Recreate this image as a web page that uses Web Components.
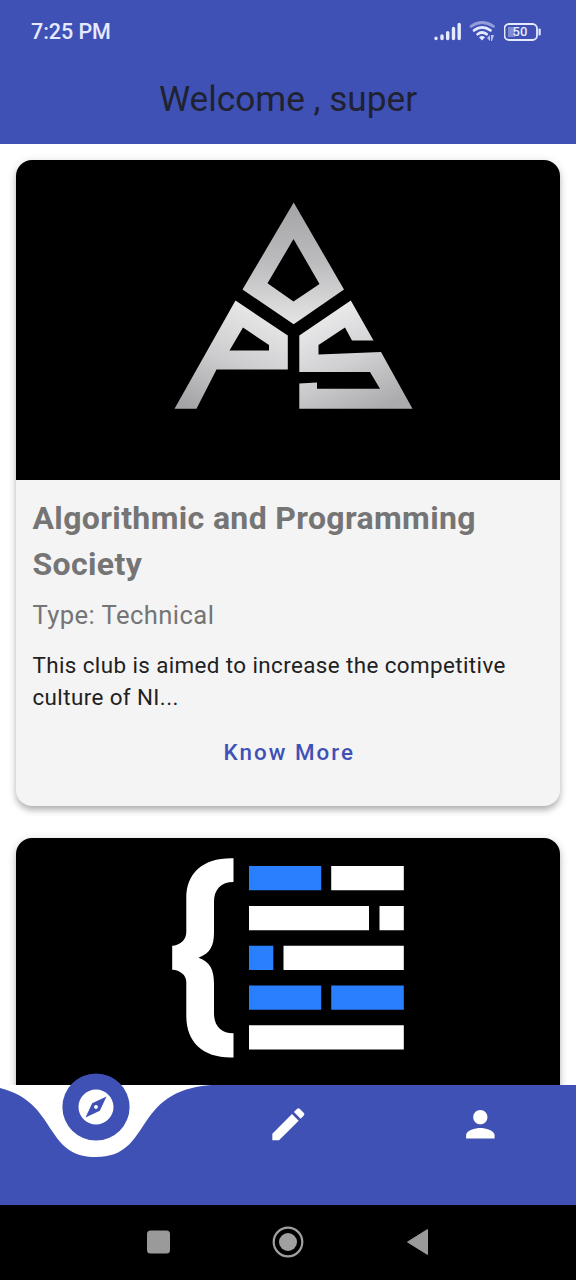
<!DOCTYPE html>
<html lang="en">
<head>
<meta charset="utf-8">
<title>Clubs</title>
<style>
html,body{margin:0;height:100%}
body{background:#fff;font-family:Roboto,"Liberation Sans",sans-serif;overflow:hidden}
</style>
</head>
<body>
<club-app></club-app>
<script>
function define(name, html) {
  const template = document.createElement('template');
  template.innerHTML = html;
  customElements.define(name, class extends HTMLElement {
    constructor() {
      super();
      this.attachShadow({ mode: 'open' }).append(template.content.cloneNode(true));
    }
  });
}

define('status-bar', `
<style>
:host{display:flex;justify-content:space-between;align-items:center;height:62px;padding:0 34px 0 31px;box-sizing:border-box;color:#e6eaff}
.time{font-size:21.5px;font-weight:500;line-height:26px;letter-spacing:-.05px;padding-top:2px}
.icons{display:flex;align-items:center;gap:8px}
svg{display:block}
.battery{display:grid;align-items:center;width:38px;height:18px}
.battery>*{grid-area:1/1}
.battery span{font-size:13px;font-weight:500;line-height:18px;width:32px;text-align:center;padding-top:1px}
</style>
<span class="time">7:25 PM</span>
<div class="icons">
  <svg width="28" height="20" viewBox="0 0 28 20" stroke="currentColor" stroke-width="3.400" stroke-linecap="round"><path d="M3 17.600v-.4M9 17.600v-2.600M14.700 17.600v-6M20.500 17.600V7.500M26.200 17.600V3.500"/></svg>
  <svg width="27" height="22" viewBox="0 0 27 22" fill="none" stroke="currentColor" stroke-width="2.700" stroke-linecap="round"><path opacity=".5" d="M2 6.400Q13 -1.400 24.500 6.400"/><path d="M5 10.400Q13 4.400 21.500 10.400"/><path d="M8.600 14.200Q13 10.800 17.600 14.200"/><path stroke="none" fill="currentColor" d="M10 17.200q3-2.600 6 0l-3 3.300z"/><path stroke="none" fill="currentColor" opacity=".75" d="M18 18l3-3v6zM22 15h3l-2 6h-1z"/></svg>
  <div class="battery">
    <svg width="38" height="18" viewBox="0 0 38 18"><path fill="currentColor" opacity=".38" d="M4 4h7v10H4z"/><rect x=".5" y="1" width="32.500" height="16" rx="4.500" fill="none" stroke="currentColor" stroke-width="1.800"/><path d="M35.600 6.500v5" stroke="currentColor" stroke-width="2.200" stroke-linecap="round"/></svg>
    <span>50</span>
  </div>
</div>`);

define('app-header', `
<style>
:host{display:block;height:144px;background:#3f51b5}
h1{margin:0;height:72px;line-height:74px;text-align:center;font-size:35.200px;font-weight:400;color:#202230}
</style>
<status-bar></status-bar><h1><slot></slot></h1>`);

define('club-card', `
<style>
:host{display:block;border-radius:16px;background:#f4f4f4;box-shadow:0 5px 6px -1px rgba(0,0,0,.22),0 2px 10px rgba(0,0,0,.17)}
.media{height:320px;border-radius:16px 16px 0 0;overflow:hidden;background:#000}
.body{padding:15px 16px 0 16.500px;height:311.400px}
h2{margin:0;font-size:32px;line-height:46px;font-weight:700;color:#757575;letter-spacing:.36px}
.type{margin-top:9px;font-size:25.600px;line-height:38px;color:#757575;letter-spacing:.42px}
.text{margin-top:15px;font-size:22.400px;line-height:32px;color:#212121;letter-spacing:.4px;white-space:pre-line}
button{display:block;margin:19px auto 0;padding:0 9px 0 11px;height:40px;border:0;background:none;font:500 22.400px/40px Roboto,sans-serif;letter-spacing:2px;color:#3f51b5}
</style>
<div class="media"><slot name="media"></slot></div>
<div class="body">
<h2><slot name="title"></slot></h2>
<div class="type"><slot name="type"></slot></div>
<div class="text"><slot name="text"></slot></div>
<button><slot name="action"></slot></button>
</div>`);

define('aps-logo', `
<style>:host{display:block}svg{display:block;width:544px;height:320px}</style>
<svg viewBox="16 160 544 320">
<defs>
<linearGradient id="a" x1="0" y1="203" x2="0" y2="323" gradientUnits="userSpaceOnUse"><stop stop-color="#a4a4a6"/><stop offset=".5" stop-color="#bcbcbe"/><stop offset="1" stop-color="#e4e4e5"/></linearGradient>
<linearGradient id="p" x1="250" y1="310" x2="205" y2="412" gradientUnits="userSpaceOnUse"><stop stop-color="#e6e6e7"/><stop offset=".5" stop-color="#ccccce"/><stop offset="1" stop-color="#a5a5a8"/></linearGradient>
<linearGradient id="s" x1="325" y1="310" x2="375" y2="412" gradientUnits="userSpaceOnUse"><stop stop-color="#ebebec"/><stop offset=".5" stop-color="#d0d0d3"/><stop offset="1" stop-color="#ababae"/></linearGradient>
</defs>
<g fill-rule="evenodd">
<path fill="url(#a)" d="M293.700 202.500 344 289.500 293.700 324.300 242.500 289.500zM293.500 239 267.500 283.300 293.500 301.500 319.500 284z"/>
<path fill="url(#p)" d="M235.500 300.500 287.800 335.500V369.500H216.500L196.500 408.700H174.500zM243 327.500 229.500 350.500H269V345z"/>
<path fill="url(#s)" d="M350.800 300.500 373.500 340.500H352L345 327.500 318.500 345V354.500L381 352 412.500 408.700H299.300V383.500L317 382.500V388.800H380L370 372H299.300V335.500z"/>
</g></svg>`);

define('code-logo', `
<style>:host{display:block}svg{display:block;width:544px;height:320px}</style>
<svg viewBox="16 838 544 320">
<path fill="#fff" d="M233.500 858.300V882C221 882 214 889.500 214 902V932C214 946 210.500 953 198.500 957.700C210.500 962 214 970 214 984V1013C214 1026 221 1033.300 233.500 1033.300V1057.400C204 1058.500 186.300 1043 186.300 1016V982C186.300 975 180 970.200 172.200 969.800V945.800C180 945.400 186.300 940 186.300 932V898C186.300 873 203 857.500 233.500 858.300z"/>
<path fill="#fff" d="M331.200 866h72.600v24.300h-72.600zM249 906h120v24.300H249zM379.500 906h24.300v24.300h-24.300zM283.500 945.700h120.300V970H283.500zM249 1025.200h154.800v24.300H249z"/>
<path fill="#2a7fff" d="M249 866h72.200v24.300H249zM249 945.700h24.300V970H249zM249 985.500h72.200v24.300H249zM331.200 985.500h72.600v24.300h-72.600z"/>
</svg>`);

define('nav-curve', `
<style>
:host{display:grid;height:120px}
:host>*{grid-area:1/1}
svg{display:block;overflow:visible}
.items{display:grid;grid-template-columns:repeat(3,1fr);position:relative}
.items>div{display:flex;justify-content:center;align-items:flex-start}
.plain{padding-top:18.200px}
.active svg{margin-top:-12px}
</style>
<svg width="576" height="120" viewBox="0 0 576 120"><path fill="#fff" d="M0 0H576V120H0z"/><path fill="#3f51b5" d="M-19.200 0C61.440 6 38.400 72 96 72C153.600 72 130.560 6 211.200 0H576V120H-20z"/></svg>
<div class="items">
<div class="active"><svg width="68" height="68" viewBox="0 0 68 68"><circle cx="34" cy="34" r="33.600" fill="#3f51b5"/><path transform="translate(13 13) scale(1.750)" fill="#fff" d="M12 10.900c-.61 0-1.100.49-1.100 1.100s.49 1.100 1.100 1.100c.61 0 1.100-.49 1.100-1.100s-.49-1.100-1.100-1.100zM12 2C6.480 2 2 6.480 2 12s4.480 10 10 10 10-4.480 10-10S17.520 2 12 2zm2.190 12.190L6 18l3.810-8.190L18 6l-3.810 8.190z"/></svg></div>
<div class="plain"><svg width="42.700" height="42.700" viewBox="0 0 24 24" fill="#fff"><path d="M3 17.250V21h3.750L17.810 9.940l-3.750-3.750L3 17.250zM20.710 7.040a1 1 0 0 0 0-1.410l-2.340-2.340a1 1 0 0 0-1.410 0l-1.830 1.830 3.750 3.750 1.830-1.830z"/></svg></div>
<div class="plain"><svg width="42.700" height="42.700" viewBox="0 0 24 24" fill="#fff"><path d="M12 12c2.210 0 4-1.790 4-4s-1.790-4-4-4-4 1.790-4 4 1.790 4 4 4zm0 2c-2.670 0-8 1.340-8 4v2h16v-2c0-2.660-5.330-4-8-4z"/></svg></div>
</div>`);

define('system-nav', `
<style>
:host{display:flex;height:75px;background:#000;align-items:center;justify-content:center}
div{flex:0 0 130px;display:flex;justify-content:center}
svg{display:block;margin-top:-1px}
</style>
<div><svg width="32" height="32"><rect x="5" y="4.500" width="23" height="23" rx="3.500" fill="#9a9a9a"/></svg></div>
<div><svg width="32" height="32"><circle cx="16" cy="16" r="14.300" fill="none" stroke="#a0a0a0" stroke-width="2.200"/><circle cx="16" cy="16" r="9" fill="#a0a0a0"/></svg></div>
<div><svg width="32" height="32"><path d="M5.500 16 25.500 3.500V28.500z" fill="#9a9a9a" stroke="#9a9a9a" stroke-linejoin="round"/></svg></div>`);

define('club-app', `
<style>
:host{display:grid;grid-template-rows:144px 941px 120px 75px;width:576px;height:1280px;overflow:hidden}
main{padding:16px 16px 0;display:flex;flex-direction:column;gap:32px;overflow:hidden;background:#fff}
club-card{flex:none}
</style>
<app-header>Welcome , super</app-header>
<main>
<club-card><aps-logo slot="media"></aps-logo><span slot="title">Algorithmic and Programming Society</span><span slot="type">Type: Technical</span><span slot="text">This club is aimed to increase the competitive culture of NI...</span><span slot="action">Know More</span></club-card>
<club-card><code-logo slot="media"></code-logo></club-card>
</main>
<nav-curve></nav-curve>
<system-nav></system-nav>`);
</script>
</body>
</html>
